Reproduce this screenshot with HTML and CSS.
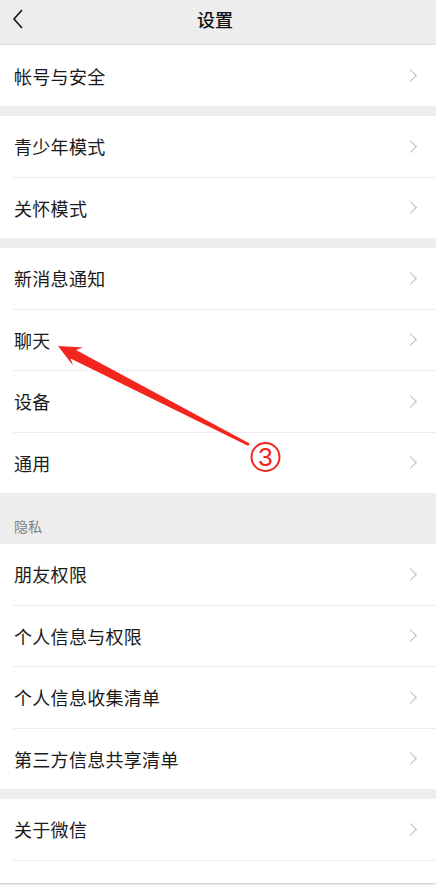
FILE: index.html
```html
<!DOCTYPE html>
<html lang="zh-CN">
<head>
<meta charset="utf-8">
<title>设置</title>
<link rel="stylesheet" href="styles.css">
</head>
<body>
<div class="page">
  <header class="topbar">
    <svg class="back" width="12" height="20" viewBox="0 0 12 20"><polyline points="10,1 2,10 10,19" fill="none" stroke="#1a1a1a" stroke-width="1.7"/></svg>
    <div class="title">设置</div>
  </header>

  <section class="group first">
    <div class="row tall"><span class="label">帐号与安全</span><i class="chev"></i></div>
  </section>

  <section class="group">
    <div class="row"><span class="label">青少年模式</span><i class="chev"></i></div>
    <div class="row"><span class="label">关怀模式</span><i class="chev"></i></div>
  </section>

  <section class="group">
    <div class="row"><span class="label">新消息通知</span><i class="chev"></i></div>
    <div class="row"><span class="label">聊天</span><i class="chev"></i></div>
    <div class="row"><span class="label">设备</span><i class="chev"></i></div>
    <div class="row"><span class="label">通用</span><i class="chev"></i></div>
  </section>

  <div class="section-title">隐私</div>

  <section class="group nogap">
    <div class="row"><span class="label">朋友权限</span><i class="chev"></i></div>
    <div class="row"><span class="label">个人信息与权限</span><i class="chev"></i></div>
    <div class="row"><span class="label">个人信息收集清单</span><i class="chev"></i></div>
    <div class="row"><span class="label">第三方信息共享清单</span><i class="chev"></i></div>
  </section>

  <section class="group">
    <div class="row"><span class="label">关于微信</span><i class="chev"></i></div>
    <div class="row stub"></div>
  </section>

  <svg class="annot" width="436" height="885" viewBox="0 0 436 885">
    <polygon points="58,346 83,347.5 76,350 249.6,443.6 248.4,446 70.5,358.5 73,365.5" fill="#f3261d"/>
    <circle cx="265.5" cy="457" r="14" fill="none" stroke="#f3261d" stroke-width="2"/>
    <text x="265.5" y="466" text-anchor="middle" class="num">3</text>
  </svg>
</div>
</body>
</html>
```

FILE: styles.css
```css
* { box-sizing: border-box; }
html, body {
  margin: 0;
  padding: 0;
  background: #ededed;
  overflow: hidden;
}
body {
  font-family: "Noto Sans CJK SC", "Noto Sans", sans-serif;
  color: #1a1a1a;
}
.page {
  position: relative;
  width: 436px;
  height: 885px;
  overflow: hidden;
  background: #ededed;
}
.topbar {
  height: 45px;
  border-bottom: 1px solid #dedede;
  display: flex;
  align-items: center;
  justify-content: center;
  position: relative;
  background: #ededed;
}
.back {
  position: absolute;
  left: 12px;
  top: 9px;
}
.title {
  font-size: 18px;
  font-weight: 500;
  margin-top: -6px;
  margin-right: 6px;
  color: #111;
}
.group {
  background: #fff;
  margin-top: 10px;
}
.group.first,
.group.nogap { margin-top: 0; }
.row {
  height: 60.5px;
  display: flex;
  align-items: center;
  justify-content: space-between;
  padding: 0 19px 0 14px;
}
.row.tall { height: 61px; }
.row + .row {
  height: 61.5px;
  border-top: 1px solid #ececec;
  border-image: linear-gradient(to right, #fff 14px, #ececec 14px) 1;
}
.label {
  font-size: 18px;
  line-height: 24px;
  letter-spacing: 0.3px;
}
.chev {
  width: 9px;
  height: 9px;
  border-top: 1.6px solid #b8b8b8;
  border-right: 1.6px solid #b8b8b8;
  transform: rotate(45deg);
  margin-right: 2px;
}
.section-title {
  height: 51px;
  padding: 23px 0 0 14px;
  font-size: 14px;
  color: #7f7f7f;
  line-height: 20px;
}
.row + .row.stub {
  height: 23px;
}
.group:last-of-type {
  border-bottom: 1px solid #d6d6d6;
}
.annot {
  position: absolute;
  left: 0;
  top: 0;
  pointer-events: none;
}
.num {
  font-family: "Liberation Sans", "DejaVu Sans", sans-serif;
  font-size: 26px;
  fill: #f3261d;
}
```
